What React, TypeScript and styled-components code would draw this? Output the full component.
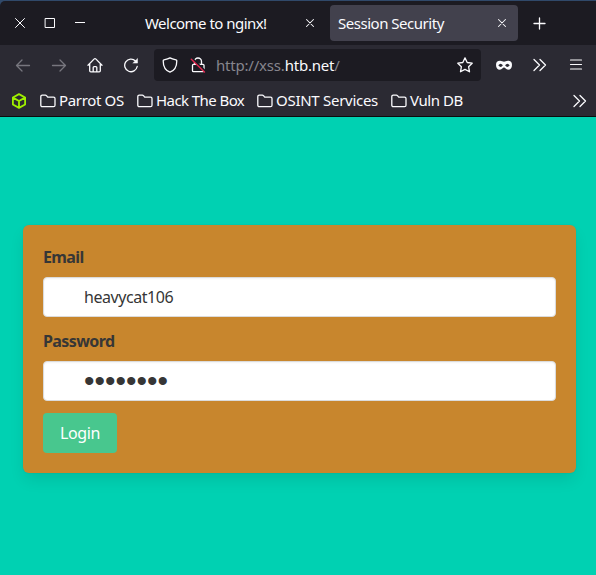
import React from 'react';
import styled, { createGlobalStyle } from 'styled-components';

const Global = createGlobalStyle`
  * { box-sizing: border-box; }
  html, body { margin: 0; padding: 0; background: #00d1b2; }
  body { font-family: "Noto Sans", "Open Sans", sans-serif; font-stretch: 87.5%; overflow: hidden; }
  button, input { font-family: inherit; font-stretch: inherit; }
`;

const Window = styled.div`
  width: 596px;
  height: 575px;
  display: flex;
  flex-direction: column;
  overflow: hidden;
  background: #30496a;
  padding-top: 1px;
`;

const TabBar = styled.div`
  height: 44px;
  flex: none;
  display: flex;
  align-items: center;
  background: #1c1b22;
  border-top-left-radius: 5px;
  color: #fbfbfe;
`;

const WindowControls = styled.div`
  display: flex;
  gap: 14px;
  padding-left: 12px;
  width: 137px;
`;

const Icon = styled.svg<{ $size?: number; $color?: string }>`
  display: block;
  flex: none;
  width: ${(p) => p.$size ?? 16}px;
  height: ${(p) => p.$size ?? 16}px;
  fill: none;
  stroke: ${(p) => p.$color ?? '#fbfbfe'};
  stroke-width: 1.3;
  stroke-linecap: round;
  stroke-linejoin: round;
`;

const Tab = styled.div<{ $active?: boolean }>`
  width: ${(p) => (p.$active ? 188 : 193)}px;
  height: 36px;
  flex: none;
  display: flex;
  align-items: center;
  justify-content: space-between;
  padding: 0 8px;
  padding-right: ${(p) => (p.$active ? 8 : 12)}px;
  border-radius: 4px;
  background: ${(p) => (p.$active ? '#42414d' : 'transparent')};
`;

const Label = styled.span<{ $spacing?: number }>`
  font-size: 15px;
  line-height: 20px;
  letter-spacing: ${(p) => p.$spacing ?? 0}px;
  white-space: nowrap;
  color: #fbfbfe;
`;

const NewTab = styled.div`
  margin-left: 13px;
`;

const NavBar = styled.div`
  height: 40px;
  flex: none;
  display: flex;
  align-items: center;
  background: #2b2a33;
  padding: 0 12px 0 15px;
`;

const NavButtons = styled.div`
  display: flex;
  gap: 20px;
  width: 139px;
`;

const UrlBar = styled.div`
  width: 327px;
  height: 32px;
  flex: none;
  display: flex;
  align-items: center;
  background: #1c1b22;
  border-radius: 4px;
  padding: 0 8px;
`;

const UrlText = styled(Label)`
  color: #86858d;
  margin-left: 10px;
  flex: 1;
`;

const Domain = styled.span`
  color: #fbfbfe;
`;

const Lock = styled.div`
  margin-left: 12px;
`;

const Extensions = styled.div`
  flex: 1;
  display: flex;
  justify-content: space-between;
  padding-left: 15px;
`;

const BookmarkBar = styled.div`
  height: 32px;
  flex: none;
  display: flex;
  align-items: center;
  background: #2b2a33;
  border-bottom: 1px solid #0c0c0d;
  padding: 0 8px 0 11px;
`;

const Bookmark = styled.div<{ $width: number }>`
  width: ${(p) => p.$width}px;
  display: flex;
  align-items: center;
  gap: 3px;
`;

const BookmarkLabel = styled(Label)`
  padding-bottom: 1px;
`;

const BookmarkList = styled.div`
  display: flex;
  flex: 1;
  padding-left: 13px;
`;

const Page = styled.main`
  flex: 1;
  background: #00d1b2;
  padding: 108px 20px 0 23px;
`;

const Card = styled.form`
  width: 553px;
  height: 248px;
  background: #c8862d;
  border-radius: 6px;
  padding: 20px;
  box-shadow: 0 8px 16px -2px rgba(10, 10, 10, 0.1), 0 0 0 1px rgba(10, 10, 10, 0.02);
`;

const Field = styled.div`
  margin-bottom: 12px;
`;

const FieldLabel = styled.label`
  display: block;
  height: 24px;
  margin-bottom: 8px;
  color: #363636;
  font-size: 16px;
  line-height: 24px;
  font-weight: 700;
  letter-spacing: -0.6px;
`;

const Input = styled.input`
  display: block;
  width: 513px;
  height: 40px;
  border: 1px solid #dbdbdb;
  border-radius: 4px;
  background: #fff;
  color: #363636;
  padding: 0 11px 0 40px;
  font-size: 16px;
  line-height: 24px;
  letter-spacing: -0.45px;
  box-shadow: inset 0 1px 2px rgba(10, 10, 10, 0.05);
  outline: none;
`;

const MaskedInput = styled(Input)`
  font-family: "Liberation Sans", sans-serif;
  font-size: 30px;
  letter-spacing: 0;
  padding-left: 40px;
`;

const Submit = styled.button`
  display: block;
  width: 74px;
  height: 40px;
  border: 0;
  border-radius: 4px;
  background: #48c78e;
  color: #fff;
  font-size: 16px;
  line-height: 24px;
  letter-spacing: -0.4px;
  padding: 0;
`;

const Folder = () => (
  <Icon viewBox="0 0 16 16">
    <path d="M.8 3.7c0-1 .6-1.500 1.500-1.500h3.100c.5 0 .8.2 1.100.5l1.200 1.400h5.800c1 0 1.500.6 1.500 1.500v6.600c0 .9-.6 1.500-1.500 1.500H2.300c-.9 0-1.500-.6-1.500-1.500z" />
  </Icon>
);

const Chevrons = () => (
  <Icon viewBox="0 0 16 16">
    <path d="m2 2.500 5.500 5.500L2 13.500M8 2.500l5.500 5.500L8 13.500" />
  </Icon>
);

const CloseTab = () => (
  <Icon viewBox="0 0 16 16">
    <path strokeWidth="1.05" d="m4.500 4.500 7 7m0-7-7 7" />
  </Icon>
);

const bookmarks = [
  { name: 'Parrot OS', width: 97, spacing: -0.35 },
  { name: 'Hack The Box', width: 120, spacing: -0.57 },
  { name: 'OSINT Services', width: 134, spacing: -0.28 },
  { name: 'Vuln DB', width: 80, spacing: -0.42 },
];

export default function App() {
  return (
    <>
      <Global />
      <Window>
        <TabBar>
          <WindowControls>
            <Icon viewBox="0 0 16 16"><path strokeWidth="1" d="m3.500 3.500 9 9m0-9-9 9" /></Icon>
            <Icon viewBox="0 0 16 16"><path strokeWidth="1" strokeLinejoin="miter" d="M3.500 3.500h9v9h-9z" /></Icon>
            <Icon viewBox="0 0 16 16"><path strokeWidth="1" strokeLinecap="butt" d="M3 7.500h10" /></Icon>
          </WindowControls>
          <Tab>
            <Label $spacing={-0.53}>Welcome to nginx!</Label>
            <CloseTab />
          </Tab>
          <Tab $active>
            <Label $spacing={-0.48}>Session Security</Label>
            <CloseTab />
          </Tab>
          <NewTab>
            <Icon viewBox="0 0 16 16"><path d="M8.500 3v11M3 8.500h11" /></Icon>
          </NewTab>
        </TabBar>
        <NavBar>
          <NavButtons>
            <Icon viewBox="0 0 16 16" $color="#77767e"><path d="M14.500 8.500h-13M7 3 1.500 8.500 7 14" /></Icon>
            <Icon viewBox="0 0 16 16" $color="#77767e"><path d="M1.500 8.500h13M9 3l5.500 5.500L9 14" /></Icon>
            <Icon viewBox="0 0 16 16">
              <path d="m1 8.200 6-6.100q1-1 2 0l6 6.100M2.700 7v6.700q0 1.100 1.100 1.100h8.400q1.100 0 1.100-1.100V7M6.200 14.500v-4q0-.9.9-.9h1.800q.9 0 .9.9v4" />
            </Icon>
            <Icon viewBox="0 0 16 16">
              <path d="M14.200 9.500A6.300 6.300 0 1 1 12.500 4" />
              <path fill="#fbfbfe" strokeWidth=".5" d="M14.500 1.800v4.300h-4.300z" />
            </Icon>
          </NavButtons>
          <UrlBar>
            <Icon viewBox="0 0 16 16">
              <path d="M8 .9c1.600 1 3.800 1.500 6 1.900.5.1.8.5.8.9 0 5.500-1.600 9.600-6.800 11.400C2.800 13.300 1.200 9.200 1.200 3.700c0-.4.3-.8.8-.9C4.200 2.400 6.400 1.900 8 .9z" />
            </Icon>
            <Lock>
              <Icon viewBox="0 0 16 16">
                <path d="M4.500 7V4.500a3.500 3.500 0 0 1 7 0V7M3.500 7.300h9.500q1 0 1 1v5.400q0 1-1 1H3.500q-1 0-1-1V8.300q0-1 1-1z" />
                <path stroke="#1c1b22" strokeWidth="2.400" d="m3 2.600 12 11.500" />
                <path stroke="#e22850" strokeWidth="1.400" d="m1.300 2.300 13.200 12.700" />
              </Icon>
            </Lock>
            <UrlText $spacing={-0.2}>http://xss.<Domain>htb.net</Domain>/</UrlText>
            <Icon viewBox="0 0 16 16">
              <path d="m8 .9 2.200 4.600 5 .7-3.600 3.500.9 5.100L8 12.400l-4.500 2.400.9-5.100L.8 6.200l5-.7z" />
            </Icon>
          </UrlBar>
          <Extensions>
            <Icon viewBox="0 0 16 16">
              <path fill="#fbfbfe" fillRule="evenodd" stroke="none" d="M4 3.800c1.700 0 2.800.9 4 .9s2.300-.9 4-.9c2.600 0 4 1.500 4 4.100 0 3-1.600 4.800-3.800 4.800-2.300 0-3-2.100-4.200-2.100s-1.900 2.100-4.200 2.100C1.600 12.700 0 10.900 0 7.900c0-2.600 1.400-4.100 4-4.100zM2.300 8.300q2.500 3.200 4.600 0-2.300-3-4.600 0zm6.800 0q2.100 3.200 4.600 0-2.300-3-4.600 0z" />
            </Icon>
            <Chevrons />
            <Icon viewBox="0 0 16 16"><path strokeWidth="1.200" d="M2.500 3h11M2.500 7.500h11m-11 4.500h11" /></Icon>
          </Extensions>
        </NavBar>
        <BookmarkBar>
          <Icon viewBox="0 0 16 16" $color="#9fef00">
            <path strokeWidth="1.800" d="m8 1.100 6.100 3.400v7L8 14.900l-6.100-3.400v-7zM2 4.600l6 3.400 6-3.400M8 8v6.500" />
          </Icon>
          <BookmarkList>
            {bookmarks.map((b) => (
              <Bookmark key={b.name} $width={b.width}>
                <Folder />
                <BookmarkLabel $spacing={b.spacing}>{b.name}</BookmarkLabel>
              </Bookmark>
            ))}
          </BookmarkList>
          <Chevrons />
        </BookmarkBar>
        <Page>
          <Card onSubmit={(e) => e.preventDefault()}>
            <Field>
              <FieldLabel htmlFor="email">Email</FieldLabel>
              <Input id="email" type="text" defaultValue="heavycat106" />
            </Field>
            <Field>
              <FieldLabel htmlFor="password">Password</FieldLabel>
              <MaskedInput id="password" type="password" defaultValue="password" />
            </Field>
            <Submit type="submit">Login</Submit>
          </Card>
        </Page>
      </Window>
    </>
  );
}
